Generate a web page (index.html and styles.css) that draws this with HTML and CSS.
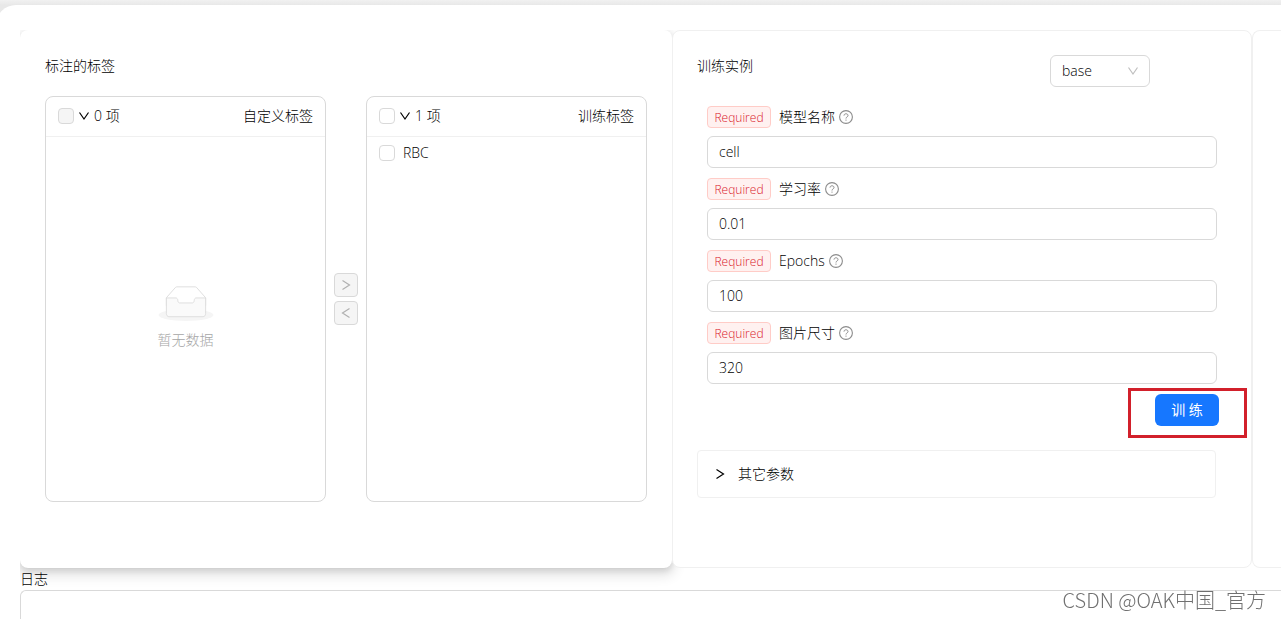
FILE: index.html
```html
<!DOCTYPE html>
<html lang="zh-CN">
<head>
<meta charset="utf-8">
<meta name="viewport" content="width=device-width, initial-scale=1">
<title>训练实例</title>
<link rel="stylesheet" href="styles.css">
</head>
<body>
<svg class="sprite" aria-hidden="true">
  <symbol id="down" viewBox="0 0 12 12"><path d="M1.500 2.500 6 9l4.500-6.500" fill="none" stroke="currentColor" stroke-width="1.200"/></symbol>
  <symbol id="right" viewBox="0 0 12 12"><path d="M2.500 1.500 9.500 6l-7 4.500" fill="none" stroke="currentColor" stroke-width="1.200"/></symbol>
  <symbol id="left" viewBox="0 0 12 12"><path d="M9.500 1.500 2.500 6l7 4.500" fill="none" stroke="currentColor" stroke-width="1.200"/></symbol>
  <symbol id="help" viewBox="0 0 14 14"><circle cx="7" cy="7" r="6.400" fill="none" stroke="currentColor" stroke-width="1.100"/><path d="M5 5.600C5 3.200 9 3.200 9 5.500 9 7 7 6.900 7 8.500" fill="none" stroke="currentColor"/><circle cx="7" cy="10.100" r=".65" fill="currentColor"/></symbol>
</svg>
<main class="panel">
  <div class="content">
    <div class="cards">
      <section class="card card-raised">
        <h2 class="card-title">标注的标签</h2>
        <div class="transfer">
          <div class="list">
            <div class="list-head">
              <input class="check" type="checkbox" disabled aria-label="全选自定义标签">
              <svg class="icon-down"><use href="#down"/></svg>
              <span class="count">0 项</span>
              <span class="list-name">自定义标签</span>
            </div>
            <div class="empty">
              <svg class="empty-icon" viewBox="0 0 64 41"><g transform="translate(0 1)" fill="none" fill-rule="evenodd"><ellipse fill="#f5f5f5" cx="32" cy="33" rx="32" ry="7"/><g stroke="#d9d9d9"><path fill="#fff" d="M55 12.760 44.854 1.258C44.367.474 43.656 0 42.907 0H21.093c-.749 0-1.460.474-1.947 1.257L9 12.761V22h46v-9.240z"/><path d="M41.613 15.931c0-1.605.994-2.930 2.227-2.931H55v18.137C55 33.260 53.680 35 52.050 35h-40.100C10.320 35 9 33.259 9 31.137V13h11.160c1.233 0 2.227 1.323 2.227 2.928v.022c0 1.605 1.005 2.901 2.237 2.901h14.752c1.232 0 2.237-1.308 2.237-2.913v-.007z" fill="#fafafa"/></g></g></svg>
              <span>暂无数据</span>
            </div>
          </div>
          <div class="moves">
            <button class="move" type="button" disabled aria-label="右移"><svg class="icon"><use href="#right"/></svg></button>
            <button class="move" type="button" disabled aria-label="左移"><svg class="icon"><use href="#left"/></svg></button>
          </div>
          <div class="list">
            <div class="list-head">
              <input class="check" type="checkbox" aria-label="全选训练标签">
              <svg class="icon-down"><use href="#down"/></svg>
              <span class="count">1 项</span>
              <span class="list-name">训练标签</span>
            </div>
            <label class="list-item"><input class="check" type="checkbox">RBC</label>
          </div>
        </div>
      </section>

      <section class="card">
        <div class="card-head">
          <h2 class="card-title">训练实例</h2>
          <div class="select-wrap">
            <select class="select" aria-label="训练实例"><option>base</option></select>
            <svg class="select-arrow"><use href="#down"/></svg>
          </div>
        </div>
        <form class="form">
          <div class="field">
            <div class="field-label"><span class="tag">Required</span><label for="name">模型名称</label><svg class="help"><use href="#help"/></svg></div>
            <input class="input" id="name" type="text" value="cell">
          </div>
          <div class="field">
            <div class="field-label"><span class="tag">Required</span><label for="rate">学习率</label><svg class="help"><use href="#help"/></svg></div>
            <input class="input" id="rate" type="text" value="0.01">
          </div>
          <div class="field">
            <div class="field-label"><span class="tag">Required</span><label for="epochs">Epochs</label><svg class="help"><use href="#help"/></svg></div>
            <input class="input" id="epochs" type="text" value="100">
          </div>
          <div class="field">
            <div class="field-label"><span class="tag">Required</span><label for="size">图片尺寸</label><svg class="help"><use href="#help"/></svg></div>
            <input class="input" id="size" type="text" value="320">
          </div>
        </form>
        <div class="actions">
          <div class="marked"><button class="train" type="button">训 练</button></div>
        </div>
        <button class="collapse" type="button" aria-expanded="false"><svg class="icon"><use href="#right"/></svg>其它参数</button>
      </section>

      <section class="card card-last"></section>
    </div>
    <label class="log-label" for="log">日志</label>
    <textarea class="log" id="log"></textarea>
  </div>
</main>
<div class="watermark">CSDN @OAK中国_官方</div>
</body>
</html>
```
FILE: styles.css
```css
* { box-sizing: border-box; }

body {
  margin: 0;
  height: 100vh;
  overflow: hidden;
  padding-top: 5px;
  background: linear-gradient(#f1f1f1, #e8e8e8 5px);
  color: #000;
  font: 300 14px/22px "Open Sans", "Noto Sans CJK SC", sans-serif;
}

button, input, select, textarea { font: inherit; color: inherit; }
.sprite { display: none; }

.panel {
  height: 100%;
  margin-left: -4px;
  padding: 25px 0 0 24px;
  border-radius: 20px 0 0 0;
  background: #fff;
}

.content { height: 100%; overflow: hidden; }

.cards {
  display: grid;
  grid-template-columns: 652fr 580fr 29fr;
}

.card {
  min-width: 0;
  min-height: 538px;
  padding: 24px;
  border: 1px solid #f0f0f0;
  border-radius: 8px;
  background: #fff;
}

.card-raised {
  border-color: transparent;
  background-clip: border-box;
  box-shadow: 0 1px 2px -2px rgba(0, 0, 0, 0.16), 0 3px 6px rgba(0, 0, 0, 0.12), 0 5px 12px 4px rgba(0, 0, 0, 0.09);
}

.card-last {
  padding: 0;
  border-right: 0;
  border-radius: 8px 0 0 8px;
}

.card-title { margin: 0; font-size: 14px; font-weight: inherit; }

.transfer { display: flex; gap: 8px; margin-top: 19px; }

.list {
  flex: 1;
  height: 406px;
  display: flex;
  flex-direction: column;
  border: 1px solid #d9d9d9;
  border-radius: 8px;
}

.list-head {
  display: flex;
  align-items: center;
  gap: 4px;
  height: 40px;
  padding: 0 12px 1px;
  border-bottom: 1px solid #f0f0f0;
}

.list-name { margin-left: auto; }

.check {
  appearance: none;
  flex: none;
  width: 16px;
  height: 16px;
  margin: 0;
  border: 1px solid #d9d9d9;
  border-radius: 4px;
  background: #fff;
}
.check:disabled { background: #f5f5f5; }

.list-item { display: flex; align-items: center; gap: 8px; padding: 5px 12px; }

.icon, .icon-down { flex: none; width: 12px; height: 12px; }

.empty {
  flex: 1;
  display: flex;
  flex-direction: column;
  align-items: center;
  justify-content: center;
  gap: 8px;
  padding-bottom: 2px;
  color: #a6a6a6;
}
.empty-icon { width: 56px; height: 35px; }

.moves { display: flex; flex-direction: column; justify-content: center; gap: 4px; }

.move {
  display: grid;
  place-items: center;
  width: 24px;
  height: 24px;
  padding: 0;
  border: 1px solid #d9d9d9;
  border-radius: 4px;
  background: #f5f5f5;
  color: #b0b0b0;
}

.card-head { display: flex; justify-content: space-between; padding-right: 77px; }

.select-wrap { position: relative; width: 100px; height: 32px; }
.select {
  appearance: none;
  width: 100%;
  height: 100%;
  padding: 0 11px;
  border: 1px solid #d9d9d9;
  border-radius: 6px;
  background: #fff;
}
.select-arrow {
  position: absolute;
  top: 10px;
  right: 11px;
  width: 12px;
  height: 12px;
  color: #bfbfbf;
  pointer-events: none;
}

.form { display: grid; gap: 10px; margin-top: 19px; padding: 0 10px; }
.field { display: grid; gap: 8px; }
.field-label { display: flex; align-items: center; height: 22px; }

.tag {
  margin-right: 8px;
  width: 64px;
  height: 22px;
  padding-top: 1px;
  text-align: center;
  border: 1px solid #ffccc7;
  border-radius: 4px;
  background: #fff1f0;
  color: #d9202a;
  font-size: 12px;
  line-height: 20px;
}

.help { width: 14px; height: 14px; margin-left: 4px; color: #8c8c8c; }

.input {
  width: 100%;
  height: 32px;
  padding: 0 11px 2px;
  border: 1px solid #d9d9d9;
  border-radius: 6px;
  background: #fff;
}

.actions { display: flex; justify-content: flex-end; margin-top: 10px; padding-right: 8px; }

.marked { position: relative; }
.marked::after {
  content: "";
  position: absolute;
  inset: -6px -28px -12px -27px;
  border: 3px solid #d2202b;
  pointer-events: none;
}

.train {
  display: block;
  width: 64px;
  height: 32px;
  padding: 0;
  border: 0;
  border-radius: 6px;
  background: #1677ff;
  color: #fff;
  font-weight: 400;
}

.collapse {
  display: flex;
  align-items: center;
  gap: 12px;
  width: calc(100% - 11px);
  height: 48px;
  margin-top: 24px;
  padding: 0 16px;
  border: 1px solid #f0f0f0;
  border-radius: 4px;
  background: #fff;
}

.log-label { display: block; position: relative; }

.log {
  display: block;
  position: relative;
  width: 100%;
  height: 120px;
  resize: none;
  border: 1px solid #d9d9d9;
  border-right: 0;
  border-radius: 6px 0 0 6px;
  background: #fff;
}

.watermark {
  position: fixed;
  right: 15px;
  bottom: 5px;
  color: #707070;
  font: 300 20px/28px "Noto Sans CJK SC", sans-serif;
}
```
